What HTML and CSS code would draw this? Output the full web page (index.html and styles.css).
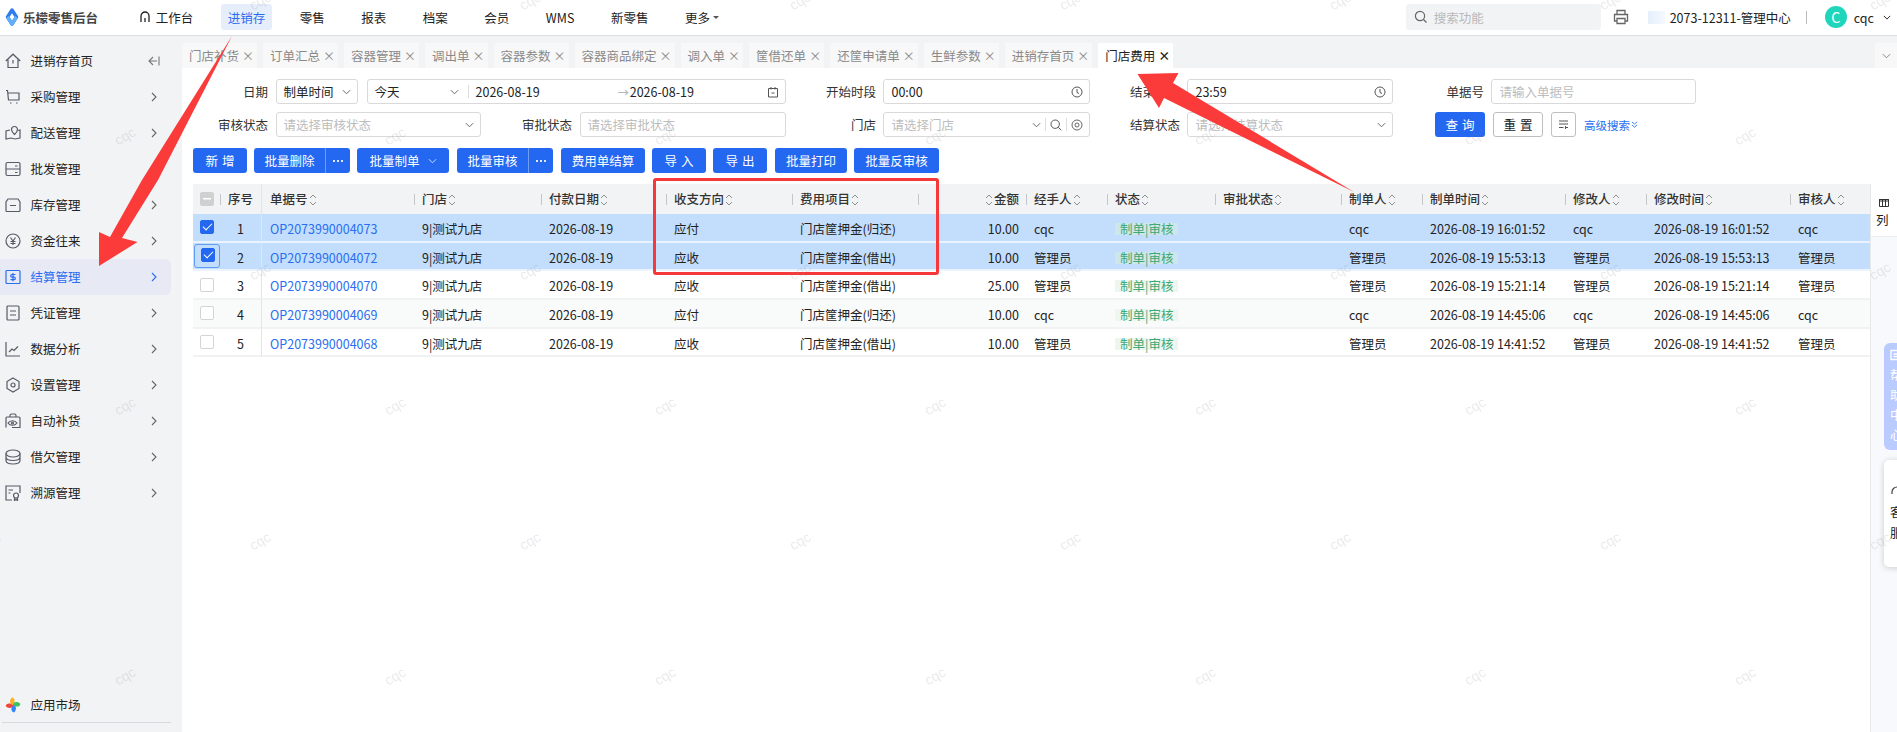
FILE: index.html
```html
<!DOCTYPE html>
<html lang="zh-CN">
<head>
<meta charset="utf-8">
<title>门店费用</title>
<link rel="stylesheet" href="styles.css">
</head>
<body>
<div class="page">
  <header class="top">
    <div class="logo">
      <svg class="logo-ic" viewBox="0 0 14 18"><path d="M7 2 11.500 9 7 16 2.500 9Z" fill="none" stroke="#2f7bf0" stroke-width="3.400" stroke-linejoin="round"/><path d="M2.500 9 7 16l4.500-7" fill="none" stroke="#62aef8" stroke-width="3.400" stroke-linejoin="round"/></svg>
      <span>乐檬零售后台</span>
    </div>
    <nav class="nav">
      <a class="nav-item home"><svg class="home-ic" viewBox="0 0 10 12"><path d="M1 11V5a4 4 0 0 1 8 0v6M5 11V7" fill="none" stroke="#222" stroke-width="1.3"/></svg>工作台</a>
      <a class="nav-item on">进销存</a>
      <a class="nav-item">零售</a>
      <a class="nav-item">报表</a>
      <a class="nav-item">档案</a>
      <a class="nav-item">会员</a>
      <a class="nav-item">WMS</a>
      <a class="nav-item">新零售</a>
      <a class="nav-item">更多<i class="caret"></i></a>
    </nav>
    <div class="top-right">
      <div class="search"><svg class="ic14" viewBox="0 0 14 14"><circle cx="6" cy="6" r="4.6" fill="none" stroke="#666" stroke-width="1.2"/><path d="m9.5 9.5 3 3" stroke="#666" stroke-width="1.3"/></svg><span>搜索功能</span></div>
      <svg class="printer" viewBox="0 0 16 16"><path d="M4 5V1.5h8V5M4 12H1.5V5.5h13V12H12M4 9.5h8v5H4Z" fill="none" stroke="#666" stroke-width="1.3"/></svg>
      <span class="org-pic"></span>
      <span class="org">2073-12311-管理中心</span>
      <span class="vline"></span>
      <span class="avatar">C</span>
      <span class="user">cqc</span>
      <svg class="chev-d" viewBox="0 0 10 6"><path d="m1 1 4 4 4-4" fill="none" stroke="#222" stroke-width="1.2"/></svg>
    </div>
  </header>

  <div class="body">
    <aside class="side">
      <a class="mi"><svg class="mi-ic" viewBox="0 0 16 16"><path d="M.8 8 8 1.2 15.2 8M3 6.500v8h10v-8M8 7v3.500"/></svg><span>进销存首页</span><svg class="collapse" viewBox="0 0 12 10"><path d="M5 1 1 5l4 4M1 5h8M11 .5v9"/></svg></a>
      <a class="mi"><svg class="mi-ic" viewBox="0 0 16 16"><path d="M1 1.500h1.500l1 9.500h10.500V4H3"/><path d="M5 14h1.500M11 14h1.500"/></svg><span>采购管理</span><svg class="chev" viewBox="0 0 6 10"><path d="m1 1 4 4-4 4"/></svg></a>
      <a class="mi"><svg class="mi-ic" viewBox="0 0 16 16"><path d="M5 5 1 6v8l5-1 4 1 5-1V5l-2 .5"/><path d="M9.500 9.500C7.500 7.500 6.500 6 6.500 4.500a3 3 0 0 1 6 0c0 1.500-1 3-3 5Z"/></svg><span>配送管理</span><svg class="chev" viewBox="0 0 6 10"><path d="m1 1 4 4-4 4"/></svg></a>
      <a class="mi"><svg class="mi-ic" viewBox="0 0 16 16"><rect x="1" y="1.500" width="14" height="13" rx="1.500"/><path d="M1 8h14M10 5h2.500M10 11.500h2.500"/></svg><span>批发管理</span></a>
      <a class="mi"><svg class="mi-ic" viewBox="0 0 16 16"><path d="M3 2h10l2 3v8.500a1 1 0 0 1-1 1H2a1 1 0 0 1-1-1V5ZM5 8.500h6"/></svg><span>库存管理</span><svg class="chev" viewBox="0 0 6 10"><path d="m1 1 4 4-4 4"/></svg></a>
      <a class="mi"><svg class="mi-ic" viewBox="0 0 16 16"><circle cx="8" cy="8" r="7"/><path d="m5.500 4.500 2.500 3.500 2.500-3.500M8 8v4M5.500 8.500h5M5.500 10.500h5"/></svg><span>资金往来</span><svg class="chev" viewBox="0 0 6 10"><path d="m1 1 4 4-4 4"/></svg></a>
      <a class="mi active"><svg class="mi-ic" viewBox="0 0 16 16"><rect x="1" y="1.500" width="14" height="13" rx="1"/><path d="M10.500 5.500H7a1.300 1.300 0 0 0 0 2.600h2a1.300 1.300 0 0 1 0 2.600H5.500M8 4v8.200"/></svg><span>结算管理</span><svg class="chev" viewBox="0 0 6 10"><path d="m1 1 4 4-4 4"/></svg></a>
      <a class="mi"><svg class="mi-ic" viewBox="0 0 16 16"><rect x="2" y="1" width="12" height="14" rx="1"/><path d="M5 6h6M5 10h6"/></svg><span>凭证管理</span><svg class="chev" viewBox="0 0 6 10"><path d="m1 1 4 4-4 4"/></svg></a>
      <a class="mi"><svg class="mi-ic" viewBox="0 0 16 16"><path d="M1 1v14h14M4 11l3-3 2 1.500 4-4"/></svg><span>数据分析</span><svg class="chev" viewBox="0 0 6 10"><path d="m1 1 4 4-4 4"/></svg></a>
      <a class="mi"><svg class="mi-ic" viewBox="0 0 16 16"><path d="m8 1 6 3.500v7L8 15l-6-3.500v-7Z"/><circle cx="8" cy="8" r="2"/></svg><span>设置管理</span><svg class="chev" viewBox="0 0 6 10"><path d="m1 1 4 4-4 4"/></svg></a>
      <a class="mi"><svg class="mi-ic" viewBox="0 0 16 16"><path d="M5 4V2.500a1.500 1.500 0 0 1 1.500-1.500h3A1.500 1.500 0 0 1 11 2.500V4M1 14.500V5a1 1 0 0 1 1-1h12a1 1 0 0 1 1 1v9.500H7"/><path d="M3 10c2-3 7-3 9 0-2 3-7 3-9 0Z"/><circle cx="7.500" cy="10" r="1"/></svg><span>自动补货</span><svg class="chev" viewBox="0 0 6 10"><path d="m1 1 4 4-4 4"/></svg></a>
      <a class="mi"><svg class="mi-ic" viewBox="0 0 16 16"><ellipse cx="8" cy="4.500" rx="7" ry="3.500"/><path d="M1 4.500v7c0 2 3 3.500 7 3.500s7-1.500 7-3.500v-7M1 8c0 2 3 3.500 7 3.500S15 10 15 8"/></svg><span>借欠管理</span><svg class="chev" viewBox="0 0 6 10"><path d="m1 1 4 4-4 4"/></svg></a>
      <a class="mi"><svg class="mi-ic" viewBox="0 0 16 16"><path d="M7 15H1V1h14v7M3.500 5H8M3.500 8h2"/><circle cx="11" cy="10.500" r="2.500"/><path d="M9.500 13v2.500l1.500-1 1.500 1V13"/></svg><span>溯源管理</span><svg class="chev" viewBox="0 0 6 10"><path d="m1 1 4 4-4 4"/></svg></a>
      <div class="side-foot">
        <svg class="market" viewBox="0 0 16 16"><path d="M8 8C4.500 8 4 3 7 .6c3 .6 3.500 4.400 1 7.400Z" fill="#ffb020"/><path d="M8 8c0-3.500 5-4 7.400-1-.6 3-4.400 3.500-7.400 1Z" fill="#3cc45c"/><path d="M8 8c3.500 0 4 5 1 7.400-3-.6-3.500-4.400-1-7.400Z" fill="#2f86f6"/><path d="M8 8c0 3.500-5 4-7.400 1 .6-3 4.400-3.500 7.400-1Z" fill="#f0453c"/></svg>
        <span>应用市场</span>
      </div>
    </aside>

    <main class="main">
      <div class="tabs">
        <a class="tab">门店补货<i>×</i></a>
        <a class="tab">订单汇总<i>×</i></a>
        <a class="tab">容器管理<i>×</i></a>
        <a class="tab">调出单<i>×</i></a>
        <a class="tab">容器参数<i>×</i></a>
        <a class="tab">容器商品绑定<i>×</i></a>
        <a class="tab">调入单<i>×</i></a>
        <a class="tab">筐借还单<i>×</i></a>
        <a class="tab">还筐申请单<i>×</i></a>
        <a class="tab">生鲜参数<i>×</i></a>
        <a class="tab">进销存首页<i>×</i></a>
        <a class="tab cur">门店费用<i>×</i></a>
        <a class="tab-more"><svg viewBox="0 0 10 6"><path d="m1 1 4 4 4-4" fill="none" stroke="#888" stroke-width="1.1"/></svg></a>
      </div>

      <form class="filter">
        <label class="lb">日期</label>
        <div class="f-split">
          <div class="fld sel-time"><span>制单时间</span><svg class="dn" viewBox="0 0 10 6"><path d="m1 1 4 4 4-4"/></svg></div>
          <div class="fld range">
            <span class="today">今天</span><svg class="dn" viewBox="0 0 10 6"><path d="m1 1 4 4 4-4"/></svg>
            <i class="sep"></i>
            <span class="d1">2026-08-19</span><span class="to">→</span><span class="d2">2026-08-19</span>
            <svg class="ic12" viewBox="0 0 12 12"><path d="M1.500 2.500h9v8.500h-9ZM4 1v2.500M8 1v2.500M4.500 7h3" fill="none" stroke="#555" stroke-width="1"/></svg>
          </div>
        </div>
        <label class="lb">开始时段</label>
        <div class="fld"><span class="grow">00:00</span><svg class="ic12" viewBox="0 0 12 12"><circle cx="6" cy="6" r="5" fill="none" stroke="#555"/><path d="M6 3v3.500l2 1" fill="none" stroke="#555"/></svg></div>
        <label class="lb">结束时段</label>
        <div class="fld"><span class="grow">23:59</span><svg class="ic12" viewBox="0 0 12 12"><circle cx="6" cy="6" r="5" fill="none" stroke="#555"/><path d="M6 3v3.500l2 1" fill="none" stroke="#555"/></svg></div>
        <label class="lb">单据号</label>
        <div class="fld"><span class="ph">请输入单据号</span></div>

        <label class="lb">审核状态</label>
        <div class="f-split">
          <div class="fld sel-a"><span class="ph grow">请选择审核状态</span><svg class="dn" viewBox="0 0 10 6"><path d="m1 1 4 4 4-4"/></svg></div>
          <label class="lb lb-in">审批状态</label>
          <div class="fld sel-b"><span class="ph">请选择审批状态</span></div>
        </div>
        <label class="lb">门店</label>
        <div class="fld store">
          <span class="ph grow">请选择门店</span><svg class="dn" viewBox="0 0 10 6"><path d="m1 1 4 4 4-4"/></svg>
          <i class="sep s2"></i>
          <svg class="ic12" viewBox="0 0 12 12"><circle cx="5.200" cy="5.200" r="4.200" fill="none" stroke="#555"/><path d="m8.300 8.300 3 3" stroke="#555"/></svg>
          <i class="sep s2"></i>
          <svg class="ic12" viewBox="0 0 12 12"><circle cx="6" cy="6" r="5" fill="none" stroke="#666"/><circle cx="6" cy="6" r="2" fill="none" stroke="#666"/></svg>
        </div>
        <label class="lb">结算状态</label>
        <div class="fld"><span class="ph grow">请选择结算状态</span><svg class="dn" viewBox="0 0 10 6"><path d="m1 1 4 4 4-4"/></svg></div>
        <div class="actions">
          <a class="btn w50 ls">查 询</a>
          <a class="btn-o w50 ls">重 置</a>
          <a class="btn-o w25"><svg class="ic11" viewBox="0 0 11 11"><path d="M1 2h9M1 5h9M1 8.500h4.500M7 8.500h3M7.500 7v3" fill="none" stroke="#555"/></svg></a>
          <a class="adv">高级搜索<svg viewBox="0 0 8 8"><path d="m1 1 3 2.500L7 1M1 4.500 4 7l3-2.500" fill="none" stroke="#2a6ef0"/></svg></a>
        </div>
      </form>

      <div class="bar">
        <a class="btn w54 ls">新 增</a>
        <div class="btn-g"><a class="btn w71">批量删除</a><a class="btn more"><svg viewBox="0 0 12 2"><path d="M1 0h2v2H1ZM5 0h2v2H5ZM9 0h2v2H9Z" fill="#dfe9ff"/></svg></a></div>
        <a class="btn w92">批量制单<svg class="dn-w" viewBox="0 0 10 6"><path d="m1 1 4 4 4-4"/></svg></a>
        <div class="btn-g nudge"><a class="btn w71">批量审核</a><a class="btn more"><svg viewBox="0 0 12 2"><path d="M1 0h2v2H1ZM5 0h2v2H5ZM9 0h2v2H9Z" fill="#dfe9ff"/></svg></a></div>
        <a class="btn w84 nudge">费用单结算</a>
        <a class="btn w54 ls">导 入</a>
        <a class="btn w54 ls">导 出</a>
        <a class="btn w72 nudge">批量打印</a>
        <a class="btn w85">批量反审核</a>
      </div>

      <div class="tbl-wrap">
        <table class="grid">
          <colgroup>
            <col class="c27"><col class="c42"><col class="c152"><col class="c127"><col class="c125"><col class="c126"><col class="c126"><col class="c108"><col class="c81"><col class="c108"><col class="c126"><col class="c81"><col class="c143"><col class="c81"><col class="c144"><col class="c80">
          </colgroup>
          <thead>
            <tr>
              <th class="ck"><span class="cb half"></span></th>
              <th class="no dv">序号</th>
              <th>单据号<svg class="st" viewBox="0 0 8 12"><path d="m1 4 3-3 3 3M1 8l3 3 3-3"/></svg></th>
              <th class="dv">门店<svg class="st" viewBox="0 0 8 12"><path d="m1 4 3-3 3 3M1 8l3 3 3-3"/></svg></th>
              <th class="dv">付款日期<svg class="st" viewBox="0 0 8 12"><path d="m1 4 3-3 3 3M1 8l3 3 3-3"/></svg></th>
              <th class="dv">收支方向<svg class="st" viewBox="0 0 8 12"><path d="m1 4 3-3 3 3M1 8l3 3 3-3"/></svg></th>
              <th class="dv">费用项目<svg class="st" viewBox="0 0 8 12"><path d="m1 4 3-3 3 3M1 8l3 3 3-3"/></svg></th>
              <th class="dv num"><svg class="st" viewBox="0 0 8 12"><path d="m1 4 3-3 3 3M1 8l3 3 3-3"/></svg>金额</th>
              <th class="dv">经手人<svg class="st" viewBox="0 0 8 12"><path d="m1 4 3-3 3 3M1 8l3 3 3-3"/></svg></th>
              <th class="dv">状态<svg class="st" viewBox="0 0 8 12"><path d="m1 4 3-3 3 3M1 8l3 3 3-3"/></svg></th>
              <th class="dv">审批状态<svg class="st" viewBox="0 0 8 12"><path d="m1 4 3-3 3 3M1 8l3 3 3-3"/></svg></th>
              <th class="dv">制单人<svg class="st" viewBox="0 0 8 12"><path d="m1 4 3-3 3 3M1 8l3 3 3-3"/></svg></th>
              <th class="dv">制单时间<svg class="st" viewBox="0 0 8 12"><path d="m1 4 3-3 3 3M1 8l3 3 3-3"/></svg></th>
              <th class="dv">修改人<svg class="st" viewBox="0 0 8 12"><path d="m1 4 3-3 3 3M1 8l3 3 3-3"/></svg></th>
              <th class="dv">修改时间<svg class="st" viewBox="0 0 8 12"><path d="m1 4 3-3 3 3M1 8l3 3 3-3"/></svg></th>
              <th class="dv">审核人<svg class="st" viewBox="0 0 8 12"><path d="m1 4 3-3 3 3M1 8l3 3 3-3"/></svg></th>
            </tr>
          </thead>
          <tbody>
            <tr class="sel">
              <td class="ck"><span class="cb on"></span></td><td class="no">1</td><td><a class="link">OP2073990004073</a></td><td>9|测试九店</td><td>2026-08-19</td><td>应付</td><td>门店筐押金(归还)</td><td class="num">10.00</td><td>cqc</td><td><span class="tag">制单|审核</span></td><td></td><td>cqc</td><td>2026-08-19 16:01:52</td><td>cqc</td><td>2026-08-19 16:01:52</td><td>cqc</td>
            </tr>
            <tr class="sel">
              <td class="ck"><span class="ring"><span class="cb on"></span></span></td><td class="no">2</td><td><a class="link">OP2073990004072</a></td><td>9|测试九店</td><td>2026-08-19</td><td>应收</td><td>门店筐押金(借出)</td><td class="num">10.00</td><td>管理员</td><td><span class="tag">制单|审核</span></td><td></td><td>管理员</td><td>2026-08-19 15:53:13</td><td>管理员</td><td>2026-08-19 15:53:13</td><td>管理员</td>
            </tr>
            <tr>
              <td class="ck"><span class="cb"></span></td><td class="no">3</td><td><a class="link">OP2073990004070</a></td><td>9|测试九店</td><td>2026-08-19</td><td>应收</td><td>门店筐押金(借出)</td><td class="num">25.00</td><td>管理员</td><td><span class="tag">制单|审核</span></td><td></td><td>管理员</td><td>2026-08-19 15:21:14</td><td>管理员</td><td>2026-08-19 15:21:14</td><td>管理员</td>
            </tr>
            <tr class="alt">
              <td class="ck"><span class="cb"></span></td><td class="no">4</td><td><a class="link">OP2073990004069</a></td><td>9|测试九店</td><td>2026-08-19</td><td>应付</td><td>门店筐押金(归还)</td><td class="num">10.00</td><td>cqc</td><td><span class="tag">制单|审核</span></td><td></td><td>cqc</td><td>2026-08-19 14:45:06</td><td>cqc</td><td>2026-08-19 14:45:06</td><td>cqc</td>
            </tr>
            <tr>
              <td class="ck"><span class="cb"></span></td><td class="no">5</td><td><a class="link">OP2073990004068</a></td><td>9|测试九店</td><td>2026-08-19</td><td>应收</td><td>门店筐押金(借出)</td><td class="num">10.00</td><td>管理员</td><td><span class="tag">制单|审核</span></td><td></td><td>管理员</td><td>2026-08-19 14:41:52</td><td>管理员</td><td>2026-08-19 14:41:52</td><td>管理员</td>
            </tr>
          </tbody>
        </table>
        <div class="col-panel">
          <div class="col-btn"><svg viewBox="0 0 10 10"><path d="M.5 1.500h9v7h-9ZM3.500 1.500v7M6.500 1.500v7M.5 1.500h9v1.500h-9Z" fill="none" stroke="#333"/></svg><span>列</span></div>
        </div>
      </div>
    </main>
  </div>

  <div class="help"><svg viewBox="0 0 14 14"><path d="M1 1.500h12v9H1ZM3.500 5h7M3.500 7.500h4" fill="none" stroke="#fff" stroke-width="1.300"/></svg><span>帮</span><span>助</span><span>中</span><span>心</span></div>
  <div class="service"><svg viewBox="0 0 14 14"><path d="M2 9V7a5 5 0 0 1 10 0v2" fill="none" stroke="#444" stroke-width="1.200"/></svg><span>客</span><span>服</span></div>

  <svg class="arrows" viewBox="0 0 1897 732">
    <path d="M232 36 158 180 122 238 137.500 242 99 266 99 232 110 237 142 180Z"/>
    <path d="M1137.500 74 1178.500 73 1173 83 1354 192 1164 98 1159 108Z"/>
  </svg>
  <div class="redbox"></div>

  <div class="wm">
    <div class="wm-row"><span>cqc</span><span>cqc</span><span>cqc</span><span>cqc</span><span>cqc</span><span>cqc</span><span>cqc</span><span>cqc</span></div>
    <div class="wm-row odd"><span>cqc</span><span>cqc</span><span>cqc</span><span>cqc</span><span>cqc</span><span>cqc</span><span>cqc</span><span>cqc</span></div>
    <div class="wm-row"><span>cqc</span><span>cqc</span><span>cqc</span><span>cqc</span><span>cqc</span><span>cqc</span><span>cqc</span><span>cqc</span></div>
    <div class="wm-row odd"><span>cqc</span><span>cqc</span><span>cqc</span><span>cqc</span><span>cqc</span><span>cqc</span><span>cqc</span><span>cqc</span></div>
    <div class="wm-row"><span>cqc</span><span>cqc</span><span>cqc</span><span>cqc</span><span>cqc</span><span>cqc</span><span>cqc</span><span>cqc</span></div>
    <div class="wm-row odd"><span>cqc</span><span>cqc</span><span>cqc</span><span>cqc</span><span>cqc</span><span>cqc</span><span>cqc</span><span>cqc</span></div>
  </div>
</div>
</body>
</html>
```

FILE: styles.css
```css
* { box-sizing: border-box; }
html, body { margin: 0; height: 100%; overflow: hidden; }
body {
  font-family: "Noto Sans CJK SC", "Noto Sans", sans-serif;
  font-size: 12.5px;
  color: #222;
  background: #fff;
}
a { color: inherit; text-decoration: none; }
svg { display: block; flex: none; }

.page { position: relative; width: 1897px; height: 732px; overflow: hidden; display: flex; flex-direction: column; }

/* top bar */
.top { flex: none; height: 36px; display: flex; align-items: center; border-bottom: 1px solid #dcdde0; background: #fff; padding-bottom: 1px; }
.logo { width: 133px; display: flex; align-items: center; gap: 4px; padding-left: 5px; font-weight: 700; color: #444; }
.logo-ic { width: 14px; height: 18px; }
.nav { display: flex; align-items: center; gap: 23px; }
.nav-item { height: 26px; padding: 0 6.75px; display: flex; align-items: center; border-radius: 3px; color: #222; }
.nav-item.home { gap: 6px; margin-right: -2px; }
.home-ic { width: 10px; height: 12px; }
.nav-item.on { background: #e7eefb; color: #2a6ef0; margin-right: -2px; }
.caret { width: 0; height: 0; margin-left: 3px; border: 3px solid transparent; border-top: 3.5px solid #555; border-bottom: 0; }
.top-right { margin-left: auto; display: flex; align-items: center; padding-right: 6px; }
.search { width: 195px; height: 26px; background: #f2f3f5; border-radius: 3px; display: flex; align-items: center; gap: 6px; padding-left: 8px; color: #b8b8b8; }
.ic14 { width: 14px; height: 14px; }
.printer { width: 16px; height: 16px; margin-left: 12px; }
.org-pic { width: 17px; height: 13px; margin-left: 19px; background: linear-gradient(90deg, #e4effb, #f5f9fe); }
.org { margin-left: 5px; }
.vline { width: 1px; height: 13px; background: #bbb; margin-left: 15px; }
.avatar { width: 22px; height: 22px; border-radius: 50%; margin-left: 18px; background: #1fd6bc; color: #fff; font-size: 14px; display: flex; align-items: center; justify-content: center; }
.user { margin-left: 7px; }
.chev-d { width: 8px; height: 5px; margin-left: 9px; }

/* layout */
.body { flex: 1; min-height: 0; display: flex; }

/* sidebar */
.side { flex: none; width: 182px; background: #f2f3f5; padding: 6.5px 11px 0 0; display: flex; flex-direction: column; }
.mi { height: 36px; flex: none; display: flex; align-items: center; padding-left: 5px; border-radius: 0 6px 6px 0; color: #222; }
.mi span { margin-left: 9.500px; flex: 1; }
.mi-ic { width: 16px; height: 16px; fill: none; stroke: #565b66; stroke-width: 1.2; }
.chev { width: 6px; height: 10px; margin-right: 14px; fill: none; stroke: #666; stroke-width: 1.1; }
.collapse { width: 12px; height: 10px; margin-right: 11px; fill: none; stroke: #777; stroke-width: 1.1; }
.mi.active { background: #e7eaf5; color: #2a6ef0; }
.mi.active .mi-ic { stroke: #2a6ef0; }
.mi.active .chev { stroke: #2a6ef0; }
.side-foot { margin-top: auto; height: 36px; margin-bottom: 9px; margin-left: 2px; padding-left: 3px; display: flex; align-items: center; gap: 9.500px; border-bottom: 1px solid #d8d9dc; }
.market { width: 16px; height: 16px; }

/* main */
.main { flex: 1; min-width: 0; display: flex; flex-direction: column; }
.tabs { flex: none; height: 32px; background: #f2f3f5; padding-top: 7px; display: flex; gap: 6px; }
.tab { height: 25px; padding: 0 7px 0 7px; display: flex; align-items: center; background: #f8f8f9; color: #8a8a8a; }
.tab i { width: 8px; margin-left: 3px; font-style: normal; font-size: 12px; line-height: 1; text-align: center; }
.tab.cur { background: #fff; color: #222; }
.tab.cur i { font-weight: 700; }
.tab-more { margin-left: auto; width: 22px; height: 25px; background: #f8f8f9; display: flex; align-items: center; justify-content: center; }
.tab-more svg { width: 9px; height: 6px; }

/* filter */
.filter { flex: none; padding-top: 11px; display: grid; grid-template-columns: 93.5px 510.2px 97.8px 206.5px 97.5px 205.5px 98.5px 204.5px; grid-auto-rows: 25px; row-gap: 8px; }
.lb { display: flex; align-items: center; justify-content: flex-end; padding-right: 7.5px; color: #333; }
.lb-in { width: 98.5px; flex: none; }
.f-split { display: flex; }
.fld { height: 25px; display: flex; align-items: center; gap: 6px; padding: 0 6px 0 7px; border: 1px solid #d9d9d9; border-radius: 3px; background: #fff; }
.grow { flex: 1; }
.ph { color: #bdbdbd; }
.dn { width: 9px; height: 6px; fill: none; stroke: #666; stroke-width: 1.1; }
.ic12 { width: 12px; height: 12px; }
.ic11 { width: 11px; height: 11px; }
.sel-time { width: 82px; justify-content: space-between; }
.range { flex: 1; margin-left: 9px; gap: 0; }
.today { width: 75px; }
.sep { width: 1px; height: 13px; margin-left: 9px; background: #ddd; flex: none; }
.sep.s2 { margin: 0; }
.d1 { margin-left: 7px; }
.to { margin-left: 78px; color: #aaa; font-size: 11px; width: 12px; flex: none; }
.d2 { flex: 1; }
.sel-a { width: 205.5px; flex: none; }
.sel-b { flex: 1; }
.store { gap: 4px; }
.actions { grid-column: 7 / 9; padding-left: 42px; display: flex; align-items: center; gap: 8px; }
.adv { display: flex; align-items: center; gap: 1px; color: #2a6ef0; font-size: 11.5px; white-space: nowrap; }
.adv svg { width: 7px; height: 7px; }

/* buttons */
.btn, .btn-o { height: 25px; display: flex; align-items: center; justify-content: center; gap: 8px; border-radius: 3px; white-space: nowrap; flex: none; }
.btn { background: #2468f2; color: #fff; }
.btn-o { border: 1px solid #bfbfbf; background: #fff; color: #222; }
.w50 { width: 50px; }
.w25 { width: 25px; }
.w54 { width: 54px; }
.w71 { width: 71px; }
.w72 { width: 72px; }
.w84 { width: 84px; }
.w85 { width: 85px; }
.w92 { width: 92px; }
.ls { word-spacing: 1px; }
.nudge { margin-left: 1px; }
.btn-g { display: flex; }
.btn-g .w71 { border-radius: 3px 0 0 3px; }
.more { width: 25px; border-left: 1px solid #6f9df5; border-radius: 0 3px 3px 0; }
.more svg { width: 12px; height: 2px; }
.dn-w { width: 9px; height: 6px; fill: none; stroke: #cfe0ff; stroke-width: 1.1; }

.bar { flex: none; margin-top: 11px; padding-left: 11px; display: flex; gap: 7px; }

/* table */
.tbl-wrap { flex: 1; min-height: 0; margin-top: 11px; padding-left: 11px; display: flex; }
.grid { flex: none; align-self: flex-start; width: 1677px; table-layout: fixed; border-collapse: separate; border-spacing: 0; }
.c27 { width: 27px; } .c42 { width: 42px; } .c152 { width: 152px; } .c127 { width: 127px; } .c125 { width: 125px; }
.c126 { width: 126px; } .c108 { width: 108px; } .c81 { width: 81px; } .c143 { width: 143px; } .c144 { width: 144px; } .c80 { width: 80px; }
.grid th, .grid td { padding: 0 0 0 8px; text-align: left; white-space: nowrap; overflow: hidden; font-weight: 400; }
.grid thead tr { height: 30px; }
.grid tbody tr { height: 28.7px; }
.grid th { background-color: #f2f3f5; font-weight: 500; color: #333; padding-bottom: 1px; }
.grid th.dv { background-image: linear-gradient(#c4c6ca, #c4c6ca); background-repeat: no-repeat; background-size: 1px 11px; background-position: left center; }
.grid td { padding-top: 2px; border-bottom: 2px solid #f1f2f4; color: #222; }
.grid tr.alt td { background: #f9fafa; }
.grid tr.sel td { background: #c3defd; border-bottom-color: #eaf3fe; }
.grid .ck { padding: 0 0 0 7px; }
.grid td.ck { padding-top: 0; }
.grid .no { padding-left: 0; text-align: center; border-right: 1px solid #e3e4e6; }
.grid .num { text-align: right; padding-left: 0; padding-right: 7px; }
.st { display: inline-block; width: 8px; height: 12px; margin: 0 1px; vertical-align: -2px; fill: none; stroke: #8f8f8f; stroke-width: 1; }
.link { color: #2a6ef0; }
.tag { display: inline-block; padding: 0 5px; line-height: 12px; background: #edf7f0; color: #3fa877; vertical-align: baseline; }
.sel .tag { background: #cde6ea; }
.cb { display: block; width: 14px; height: 14px; border: 1.5px solid #d4d4d4; border-radius: 2px; background: #fff; }
.cb.half { background: #d0d0d0 linear-gradient(#fff, #fff) center / 8px 1.5px no-repeat; border-color: #d0d0d0; }
.cb.on { border-color: #2468f2; background: #2468f2; position: relative; }
.cb.on::after { content: ""; display: block; width: 8px; height: 4px; margin: 2px 0 0 1.500px; border: solid #fff; border-width: 0 0 1.500px 1.500px; transform: rotate(-45deg); }
.ring { display: block; width: 26px; height: 24px; margin-left: -6px; padding: 4px 0 0 6px; border: 1px solid #5f9cf5; border-radius: 3px; }
.ring .cb { margin-top: -1px; }

.col-panel { flex: 1; background: #f8f9fc; border-left: 1px solid #e7e8ea; }
.col-btn { height: 53px; padding: 14px 0 0 5px; background: #fff; border-bottom: 1px solid #eceded; }
.col-btn svg { width: 10px; height: 10px; margin-left: 3px; }
.col-btn span { display: block; font-size: 12.5px; line-height: 16px; margin-top: 4px; }

/* floating helpers */
.help { position: absolute; left: 1884px; top: 343px; width: 30px; height: 107px; padding: 6px 0 0 6px; background: #b9cbff; border-radius: 6px 0 0 6px; color: #fff; display: flex; flex-direction: column; gap: 4px; }
.help svg { width: 14px; height: 14px; }
.help span { line-height: 16px; }
.service { position: absolute; left: 1884px; top: 460px; width: 30px; height: 107px; padding: 25px 0 0 6px; background: #fff; border-radius: 5px 0 0 5px; box-shadow: 0 1px 6px rgba(0, 0, 0, .18); display: flex; flex-direction: column; gap: 5px; }
.service svg { width: 14px; height: 14px; }
.service span { line-height: 16px; }

.arrows { position: absolute; left: 0; top: 0; width: 1897px; height: 732px; fill: #fb3a3a; pointer-events: none; }
.redbox { position: absolute; left: 653px; top: 178px; width: 286px; height: 97px; border: 3px solid #f5393b; border-radius: 3px; pointer-events: none; }

.wm { position: absolute; left: -145px; top: -67px; pointer-events: none; }
.wm-row { height: 135px; display: flex; align-items: center; }
.wm-row.odd { margin-left: 135px; }
.wm-row span { width: 270px; flex: none; text-align: center; font-family: "Liberation Sans", sans-serif; font-size: 14px; color: rgba(130, 130, 130, .18); transform: rotate(-30deg); }
```
